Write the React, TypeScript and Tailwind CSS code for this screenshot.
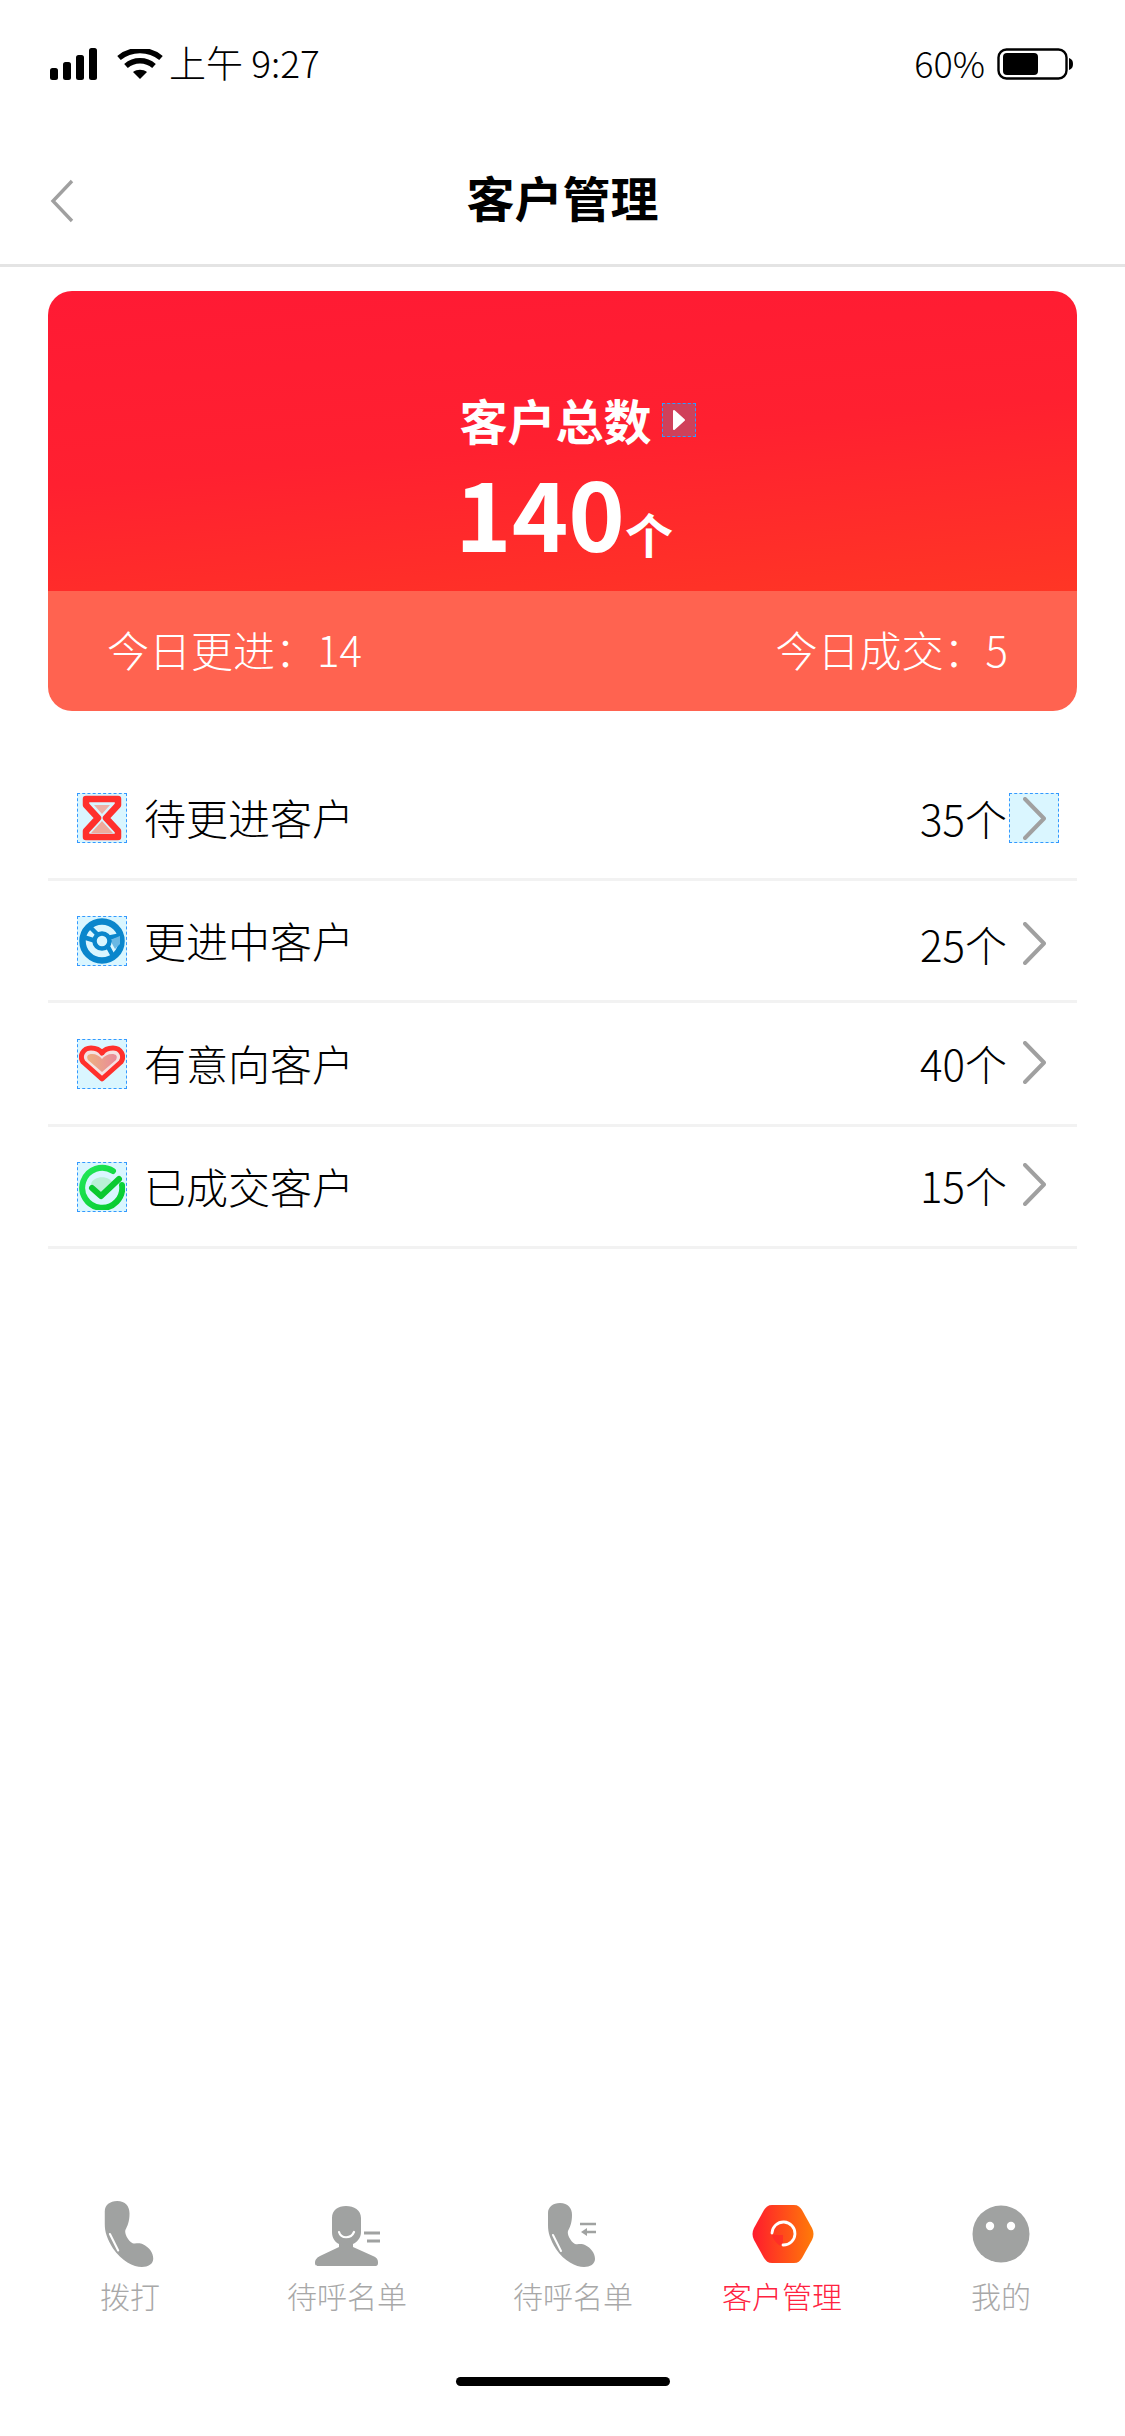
import React from "react";

const font = { fontFamily: '"Noto Sans CJK SC", "Noto Sans", sans-serif' };

const PHONE =
  "M12 0C20 0 24 5 24 12C24 20 22 24 20 28C19 31 22 38 27 41C30 42 33 40 37 42C43 45 47 50 47 56C47 61 42 64 36 64C28 64 16 58 8 46C2 36 0 30 0 22L0 10C0 4 5 0 12 0Z";

const IconBox = ({ children }: { children?: React.ReactNode }) => (
  <div className="w-[50px] h-[50px] shrink-0 bg-[#daf6ff] border border-dashed border-[#3399ff] flex items-center justify-center">
    {children}
  </div>
);

const Hourglass = () => (
  <svg width="40" height="46" viewBox="0 0 40 46">
    <path d="M12 10H28L20 19Z" fill="#eeb0a6" />
    <path d="M20 26L31 38H9Z" fill="#eeaa9c" />
    <path
      d="M4 4H36V10L24 23L36 36V42H4V36L16 23L4 10Z"
      fill="none"
      stroke="#ff302c"
      strokeWidth="6.500"
      strokeLinejoin="round"
    />
  </svg>
);

const Wheel = () => (
  <svg width="46" height="46" viewBox="0 0 46 46">
    <circle cx="23" cy="23" r="19.500" fill="none" stroke="#0a86cc" strokeWidth="6.500" />
    <path d="M4 19L17 23M11 9L19 17M28 27L34 38M28 20L43 17" stroke="#0a86cc" strokeWidth="4.500" fill="none" />
    <path d="M31 22L41 18L41 26L36 31Z" fill="#6ab8e4" />
    <circle cx="23" cy="23" r="7.500" fill="#daf6ff" stroke="#0a86cc" strokeWidth="4.500" />
  </svg>
);

const Heart = () => (
  <svg width="46" height="38" viewBox="0 0 46 38">
    <defs>
      <linearGradient id="heartFill" x1="0" y1="0" x2="1" y2="0">
        <stop offset="0" stopColor="#edb080" />
        <stop offset="1" stopColor="#e88a9a" />
      </linearGradient>
    </defs>
    <path
      d="M23 34L4 17C0 11 4 3 12 3C17 3 21 5 23 8C25 5 29 3 34 3C42 3 46 11 42 17Z"
      fill="#f4e2e2"
      stroke="#ff302c"
      strokeWidth="5"
      strokeLinejoin="round"
    />
    <path
      d="M23 27L9 15C7 11 9 9 13 9C17 9 21 11 23 14C25 11 29 9 33 9C37 9 39 11 37 15Z"
      fill="url(#heartFill)"
    />
  </svg>
);

const Check = () => (
  <svg width="46" height="46" viewBox="0 0 46 46">
    <defs>
      <linearGradient id="checkRing" x1="0" y1="0" x2="1" y2="1">
        <stop offset="0" stopColor="#22e85a" />
        <stop offset="1" stopColor="#05c92c" />
      </linearGradient>
    </defs>
    <path d="M12 20C14 11 32 11 34 20L23 31Z" fill="#b9f0d6" />
    <path
      d="M34 7A20 20 0 1 0 43 21"
      fill="none"
      stroke="url(#checkRing)"
      strokeWidth="6"
      strokeLinecap="round"
    />
    <path d="M13 24L22 32L40 15" fill="none" stroke="#0ac92f" strokeWidth="6" strokeLinecap="round" strokeLinejoin="round" />
  </svg>
);

const Chevron = () => (
  <svg width="23" height="43" viewBox="0 0 23 43" className="shrink-0">
    <path d="M2 2L21 21.500L2 41" fill="none" stroke="#a0a0a0" strokeWidth="4" strokeLinecap="round" strokeLinejoin="round" />
  </svg>
);

const rows = [
  { label: "待更进客户", count: "35个", icon: <Hourglass />, height: "h-[123px]", shift: "", boxed: true },
  { label: "更进中客户", count: "25个", icon: <Wheel />, height: "h-[122px]", shift: "mt-[6px]", boxed: false },
  { label: "有意向客户", count: "40个", icon: <Heart />, height: "h-[124px]", shift: "mb-[2px]", boxed: false },
  { label: "已成交客户", count: "15个", icon: <Check />, height: "h-[122px]", shift: "mb-[4px]", boxed: false },
];

const TabLabel = ({ text, active }: { text: string; active?: boolean }) => (
  <span className={`mt-[8px] text-[30px] leading-[40px] font-light ${active ? "text-[#ff2240]" : "text-[#a8a8a8]"}`}>
    {text}
  </span>
);

export default function App() {
  return (
    <div className="w-[1125px] h-[2436px] bg-white flex flex-col overflow-hidden" style={font}>
      {/* status bar */}
      <div className="h-[128px] shrink-0 flex items-center justify-between pl-[50px] pr-[50px] text-black">
        <div className="flex items-center">
          <svg width="48" height="32" viewBox="0 0 48 32">
            <rect x="0" y="20" width="8" height="12" rx="2.500" />
            <rect x="13" y="14" width="8" height="18" rx="2.500" />
            <rect x="26" y="7" width="8" height="25" rx="2.500" />
            <rect x="39" y="0" width="8" height="32" rx="2.500" />
          </svg>
          <svg width="46" height="30" viewBox="0 0 46 30" className="ml-[19px]">
            <path d="M2 9C14 -1 32 -1 44 9" fill="none" stroke="#000" strokeWidth="5.500" />
            <path d="M9 17C17 10 29 10 37 17" fill="none" stroke="#000" strokeWidth="5.500" />
            <path d="M16 23C20 20 26 20 30 23L23 30Z" />
          </svg>
          <span className="ml-[6px] mb-[4px] text-[37px] leading-[44px] font-light">上午 9:27</span>
        </div>
        <div className="flex items-center">
          <span className="mb-[4px] text-[36px] leading-[44px] font-light">60%</span>
          <svg width="76" height="32" viewBox="0 0 76 32" className="ml-[12px] mr-[2px]">
            <rect x="1.500" y="1.500" width="68" height="29" rx="8" fill="none" stroke="#000" strokeWidth="2.400" />
            <rect x="6" y="5" width="35" height="22" rx="4" />
            <path d="M72 10C75 11 76 13 76 16C76 19 75 21 72 22Z" />
          </svg>
        </div>
      </div>

      {/* header */}
      <div className="relative h-[139px] shrink-0 border-b-[3px] border-[#e4e4e4] flex items-center justify-center">
        <svg width="24" height="44" viewBox="0 0 24 44" className="absolute left-[50px] top-[51px]">
          <path d="M22 2L3 22L22 42" fill="none" stroke="#a0a0a0" strokeWidth="3.400" />
        </svg>
        <h1 className="text-[48px] leading-[60px] font-bold text-black">客户管理</h1>
      </div>

      {/* summary card */}
      <div className="mt-[24px] mx-[48px] h-[420px] shrink-0 rounded-[24px] overflow-hidden flex flex-col text-white">
        <div className="h-[300px] flex flex-col items-center bg-[linear-gradient(175deg,#ff1a34_0%,#ff2030_50%,#ff3625_100%)]">
          <div className="mt-[98px] ml-[30px] flex items-center">
            <span className="text-[48px] leading-[60px] font-bold">客户总数</span>
            <div className="ml-[10px] mt-[2px] w-[34px] h-[34px] bg-[#d0405a] border border-dashed border-[#3399ff] flex items-center justify-center">
              <svg width="14" height="22" viewBox="0 0 14 22">
                <path d="M2 2L12 11L2 20Z" fill="#fff" stroke="#fff" strokeWidth="2" strokeLinejoin="round" />
              </svg>
            </div>
          </div>
          <div className="flex items-end ml-[3px] mt-[7px]">
            <span className="text-[96px] leading-[110px] font-bold">140</span>
            <span className="mb-[5px] text-[48px] leading-[56px] font-bold">个</span>
          </div>
        </div>
        <div className="flex-1 flex items-center justify-between pl-[59px] pr-[69px] pb-[5px] bg-[#ff6350] text-[42px] leading-[56px] font-light">
          <span>今日更进：14</span>
          <span>今日成交：5</span>
        </div>
      </div>

      {/* customer rows */}
      <div className="mt-[47px] mx-[48px] flex flex-col">
        {rows.map((row) => (
          <div
            key={row.label}
            className={`${row.height} shrink-0 flex items-center border-b-[3px] border-[#f2f2f2] pl-[29px] pr-[18px]`}
          >
            <IconBox>{row.icon}</IconBox>
            <span className="ml-[17px] mb-[2px] flex-1 text-[42px] leading-[56px] font-light text-black">{row.label}</span>
            <div className={`flex items-center ${row.shift}`}>
              <span className="text-[42px] leading-[56px] font-light text-black">{row.count}</span>
              <div
                className={`ml-[2px] w-[50px] h-[50px] flex items-center justify-center border border-dashed ${
                  row.boxed ? "bg-[#daf6ff] border-[#3399ff]" : "border-transparent"
                }`}
              >
                <Chevron />
              </div>
            </div>
          </div>
        ))}
      </div>

      <div className="flex-1" />

      {/* tab bar */}
      <div className="shrink-0 pl-[25px] grid grid-cols-[210px_224px_228px_190px_248px] h-[118px]">
        <div className="flex flex-col items-center justify-end">
          <svg width="50" height="66" viewBox="0 0 47 64" className="mr-[2px]">
            <path d={PHONE} fill="#a0a2a1" />
            <path d="M5 32L13 48" stroke="#fff" strokeWidth="2" strokeLinecap="round" />
          </svg>
          <TabLabel text="拨打" />
        </div>
        <div className="flex flex-col items-center justify-end">
          <svg width="65" height="62" viewBox="0 0 65 60">
            <path
              d="M17 12C17 4 23 0 31 0C39 0 46 4 46 12V26C46 32 42 36 38 38V41L58 50C61 51 63 53 63 56V57C63 60 61 60 60 60H4C2 60 0 60 0 57C0 53 3 51 5 50L24 41V38C20 36 17 32 17 26Z"
              fill="#a0a2a1"
            />
            <path d="M24 26C26 33 36 33 39 26" fill="none" stroke="#fff" strokeWidth="2.200" strokeLinecap="round" />
            <path d="M49 27H65M52 35H65" stroke="#a0a2a1" strokeWidth="3" />
          </svg>
          <TabLabel text="待呼名单" />
        </div>
        <div className="flex flex-col items-center justify-end">
          <svg width="50" height="64" viewBox="0 0 50 64">
            <path d={PHONE} fill="#a0a2a1" />
            <path d="M5 32L13 48" stroke="#fff" strokeWidth="2" strokeLinecap="round" />
            <path d="M32 21H48M48 29H38" stroke="#a0a2a1" strokeWidth="2.600" />
            <path d="M33 29L39 25V33Z" fill="#a0a2a1" />
          </svg>
          <TabLabel text="待呼名单" />
        </div>
        <div className="flex flex-col items-center justify-end">
          <svg width="62" height="58" viewBox="0 0 62 58" className="mb-[4px] ml-[2px]">
            <defs>
              <linearGradient id="hexFill" x1="0" y1="0" x2="1" y2="0">
                <stop offset="0" stopColor="#ff1b2d" />
                <stop offset="1" stopColor="#ff7b08" />
              </linearGradient>
            </defs>
            <path
              d="M20 0H42C46 0 48 2 50 5L60 23C62 27 62 31 60 35L50 53C48 56 46 58 42 58H20C16 58 14 56 12 53L2 35C0 31 0 27 2 23L12 5C14 2 16 0 20 0Z"
              fill="url(#hexFill)"
            />
            <path d="M20 30L31 30L31 41C26 41 22 36 20 30Z" fill="#ff1f2d" opacity="0.55" />
            <path
              d="M20 28A11.500 11.500 0 1 1 31 40"
              fill="none"
              stroke="#fff"
              strokeWidth="2.800"
              strokeLinecap="round"
            />
          </svg>
          <TabLabel text="客户管理" active />
        </div>
        <div className="flex flex-col items-center justify-end">
          <svg width="58" height="58" viewBox="0 0 58 58" className="mb-[4px]">
            <circle cx="29" cy="29" r="28.500" fill="#a0a2a1" />
            <circle cx="18" cy="21" r="4.200" fill="#fff" />
            <circle cx="39" cy="21" r="4.200" fill="#fff" />
          </svg>
          <TabLabel text="我的" />
        </div>
      </div>

      {/* home indicator */}
      <div className="h-[121px] shrink-0 flex justify-center pt-[62px]">
        <div className="w-[214px] h-[9px] rounded-full bg-black" />
      </div>
    </div>
  );
}
